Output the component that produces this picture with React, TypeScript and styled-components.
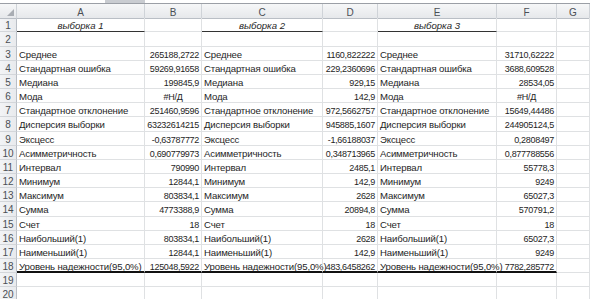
import React from 'react';
import styled, { createGlobalStyle } from 'styled-components';

const GlobalStyle = createGlobalStyle`
  html, body {
    margin: 0;
    padding: 0;
    background: #ffffff;
    overflow: hidden;
  }
  body {
    font-family: "Liberation Sans", Arial, sans-serif;
  }
`;

const COLS = '17px 128px 57px 121px 55px 119px 60px 1fr';
const ROW_H = '14.18px';

const Sheet = styled.div`
  width: 590px;
  height: 299px;
  overflow: hidden;
  background: #fff;
`;

const TopStrip = styled.div`
  height: 3px;
  display: flex;
  border-bottom: 1px solid #9b9fa6;
`;

const TopTab = styled.div`
  margin-left: 105px;
  width: 40px;
  background: #c9ccd1;
`;

const Grid = styled.div`
  display: grid;
  grid-template-columns: ${COLS};
  grid-auto-rows: ${ROW_H};
`;

const HeadRow = styled.div`
  display: contents;
`;

const ColHead = styled.div`
  height: 15px;
  box-sizing: border-box;
  background: linear-gradient(#f6f7f8, #e6e8eb);
  border-right: 1px solid #cfd3d8;
  border-bottom: 1px solid #b9bec5;
  color: #4a4f55;
  font-size: 10px;
  line-height: 17px;
  text-align: center;
`;

const Corner = styled(ColHead)`
  position: relative;
  &::after {
    content: '';
    position: absolute;
    right: 2px;
    bottom: 2px;
    border-style: solid;
    border-width: 0 0 7px 7px;
    border-color: transparent transparent #a9adb3 transparent;
  }
`;

const RowHead = styled.div`
  box-sizing: border-box;
  background: linear-gradient(90deg, #f3f4f6, #e8eaed);
  border-right: 1px solid #b9bec5;
  border-bottom: 1px solid #d3d6da;
  color: #4a4f55;
  font-size: 10px;
  line-height: 16px;
  text-align: center;
`;

type Rule = 'none' | 'thin' | 'thick';

const Cell = styled.div<{ $align?: 'left' | 'right' | 'center'; $italic?: boolean; $rule?: Rule }>`
  box-sizing: border-box;
  border-right: 1px solid #dfe1e3;
  border-bottom: ${({ $rule }) =>
    $rule === 'thick' ? '2px solid #111' : $rule === 'thin' ? '1.5px solid #333' : '1px solid #dfe1e3'};
  padding: 0 2px;
  color: #1e1e1e;
  font-size: 9.6px;
  line-height: 15.5px;
  text-align: ${({ $align }) => $align || 'left'};
  font-style: ${({ $italic }) => ($italic ? 'italic' : 'normal')};
  white-space: nowrap;
  overflow: visible;
`;

const Num = styled.span`
  font-size: 9px;
  letter-spacing: -0.3px;
`;

const Label = styled.span`
  letter-spacing: -0.15px;
`;

const stats: [string, string, string, string][] = [
  ['Среднее', '265188,2722', '1160,822222', '31710,62222'],
  ['Стандартная ошибка', '59269,91658', '229,2360696', '3688,609528'],
  ['Медиана', '199845,9', '929,15', '28534,05'],
  ['Мода', '#Н/Д', '142,9', '#Н/Д'],
  ['Стандартное отклонение', '251460,9596', '972,5662757', '15649,44486'],
  ['Дисперсия выборки', '63232614215', '945885,1607', '244905124,5'],
  ['Эксцесс', '-0,63787772', '-1,66188037', '0,2808497'],
  ['Асимметричность', '0,690779973', '0,348713965', '0,877788556'],
  ['Интервал', '790990', '2485,1', '55778,3'],
  ['Минимум', '12844,1', '142,9', '9249'],
  ['Максимум', '803834,1', '2628', '65027,3'],
  ['Сумма', '4773388,9', '20894,8', '570791,2'],
  ['Счет', '18', '18', '18'],
  ['Наибольший(1)', '803834,1', '2628', '65027,3'],
  ['Наименьший(1)', '12844,1', '142,9', '9249'],
  ['Уровень надежности(95,0%)', '125048,5922', '483,6458262', '7782,285772'],
];

const letters = ['A', 'B', 'C', 'D', 'E', 'F', 'G'];

const valueAlign = (v: string) => (v.startsWith('#') ? 'center' : 'right');

const App: React.FC = () => {
  return (
    <Sheet>
      <GlobalStyle />
      <TopStrip>
        <TopTab />
      </TopStrip>
      <Grid>
        <HeadRow>
          <Corner />
          {letters.map((l) => (
            <ColHead key={l}>{l}</ColHead>
          ))}
        </HeadRow>

        {/* row 1: sample titles */}
        <RowHead>1</RowHead>
        <Cell $align="center" $italic $rule="thin">выборка 1</Cell>
        <Cell />
        <Cell $align="center" $italic $rule="thin">выборка 2</Cell>
        <Cell />
        <Cell $align="center" $italic $rule="thin">выборка 3</Cell>
        <Cell />
        <Cell />

        <RowHead>2</RowHead>
        {letters.map((l) => (
          <Cell key={l} />
        ))}

        {stats.map(([label, a, b, c], i) => {
          const rule: Rule = i === stats.length - 1 ? 'thick' : 'none';
          return (
            <React.Fragment key={label}>
              <RowHead>{i + 3}</RowHead>
              <Cell $rule={rule}><Label>{label}</Label></Cell>
              <Cell $rule={rule} $align={valueAlign(a)}><Num>{a}</Num></Cell>
              <Cell $rule={rule}><Label>{label}</Label></Cell>
              <Cell $rule={rule} $align={valueAlign(b)}><Num>{b}</Num></Cell>
              <Cell $rule={rule}><Label>{label}</Label></Cell>
              <Cell $rule={rule} $align={valueAlign(c)}><Num>{c}</Num></Cell>
              <Cell />
            </React.Fragment>
          );
        })}

        {[19, 20].map((n) => (
          <React.Fragment key={n}>
            <RowHead>{n}</RowHead>
            {letters.map((l) => (
              <Cell key={l} />
            ))}
          </React.Fragment>
        ))}
      </Grid>
    </Sheet>
  );
};

export default App;
